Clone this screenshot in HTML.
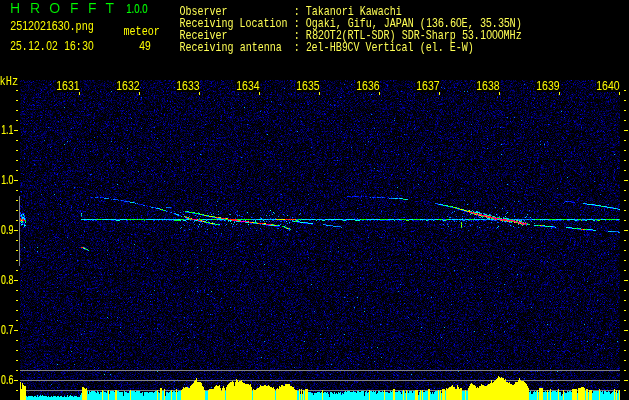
<!DOCTYPE html>
<html lang="en"><head><meta charset="utf-8"><title>HROFFT</title>
<style>
html,body{margin:0;padding:0;background:#000;overflow:hidden}
svg{display:block}
.m,.s,.t{white-space:pre}
.m{font-family:"Liberation Mono",monospace;font-size:13.5px;fill:#ff0;stroke:none}
.d{font-family:"Liberation Sans",sans-serif;font-size:12.6px}
.w{fill:#ffff55}
.s{font-family:"Liberation Sans",sans-serif;font-size:12.5px;fill:#ff0;stroke:#ff0;stroke-width:.15px}
.g{fill:#0f0;stroke:#0f0}
.t{font-family:"Liberation Sans",sans-serif;font-size:14px;fill:#0f0;stroke:#000;stroke-width:.16px;paint-order:fill stroke}
</style></head>
<body>
<svg width="629" height="400" viewBox="0 0 629 400">
<defs><filter id="nz" x="0" y="0" width="100%" height="100%" filterUnits="objectBoundingBox" color-interpolation-filters="sRGB"><feTurbulence type="fractalNoise" baseFrequency="1.7" numOctaves="1" seed="3"/><feColorMatrix type="matrix" values="0 0 0 0 0  1 0 0 0 0  1 0 0 0 0  0 0 0 0 1"/><feComponentTransfer><feFuncG type="table" tableValues="0 0 0 0 0 0 0 0 0 0 0 0 0 0 0 0 0 0 0 0 0 0 0 0 0 0 0 0 0 0 0 0 0 0 0 0 0 0 0 0 0 0 0 0 0 0 0 0 0 0 0 0 0 0 0 0 0 0 0 0 0 0 0 0 0 0 0 0 0 0 0 0 0 0 0 0 0 0 0 0 0 0 0 0 0 0 0 0 0 0 0 0 0 0 0 0 0 0 0 0 0 0 0 0 0 0 0 0 0 0 0 0 0 0 0 0 0 0 0 0 0 0 0 0 0 0 0 0 0 0 0 0 0 0 0 0 0 0 0 0 0 0 0 0 0 0 0 0 0 0 0 0 0 0 0 0 0 0 0 0 0 0 0 0 0 0 0 0 0 0 0 0 0 0 0 0 0 0 0 0 0 0 0 0 0 0 0 0 0 0 0 0 0 0 0 0.0476 0.0952 0.143 0.19 0.238 0.286 0.333 0.381 0.429 0.476 0.524 0.571 0.619 0.667 0.686 0.706 0.725 0.745 0.765 0.784 0.804 0.824 0.843 0.863 0.882 0.902 0.922 0.941 0.961 0.98 1 1 1 1 1 1 1 1 1 1 1 1 1 1 1 1 1 1 1 1 1 1 1 1 1 1 1 1 1 1 1"/><feFuncB type="table" tableValues="0 0 0 0 0 0 0 0 0 0 0 0 0 0 0 0 0 0 0 0 0 0 0 0 0 0 0 0 0 0 0 0 0 0 0 0 0 0 0 0 0 0 0 0 0 0 0 0 0 0 0 0 0 0 0 0 0 0 0 0 0 0 0 0 0 0 0 0 0 0 0 0 0 0 0 0 0 0 0 0 0 0 0 0 0 0 0 0 0 0 0 0 0 0 0 0 0 0 0 0 0 0 0 0 0 0 0 0 0 0 0 0 0 0 0 0 0 0 0 0 0 0 0 0 0 0 0 0 0.0235 0.0706 0.118 0.165 0.172 0.179 0.186 0.193 0.2 0.207 0.214 0.221 0.229 0.236 0.243 0.25 0.257 0.264 0.271 0.278 0.285 0.292 0.3 0.307 0.314 0.325 0.336 0.346 0.357 0.368 0.379 0.39 0.401 0.412 0.423 0.434 0.444 0.455 0.466 0.477 0.488 0.499 0.51 0.529 0.549 0.569 0.588 0.608 0.627 0.647 0.667 0.686 0.706 0.725 0.745 0.765 0.784 0.804 0.824 0.843 0.859 0.875 0.89 0.906 0.922 0.937 0.953 0.969 0.984 1 1 1 1 1 1 1 1 1 1 1 1 1 1 1 1 1 1 1 1 1 1 1 1 1 1 1 1 1 1 1 1 1 1 1 1 1 1 1 1 1 1 1 1 1 1 1 1 1 1 1 1 1 1 1 1 1 1 1"/></feComponentTransfer></filter></defs>
<rect width="629" height="400" fill="#000"/>
<rect x="20" y="80" width="600" height="320" fill="#00003c" filter="url(#nz)"/>
<path d="M56 80h24v12h-24zM116 80h24v12h-24zM176 80h24v12h-24zM236 80h24v12h-24zM296 80h24v12h-24zM356 80h24v12h-24zM416 80h24v12h-24zM476 80h24v12h-24zM536 80h24v12h-24zM596 80h24v12h-24z" fill="#000"/>
<g opacity="0.999" transform="rotate(0.02)">
<text class="t" y="13" x="9.9 0 29.9 0 49.3 0 69.9 0 87.9 0 105.6" xml:space="preserve">H R O F F T</text>
<text class="s g" x="126.2" y="13" textLength="21.4" lengthAdjust="spacingAndGlyphs">1.0.0</text>
<text class="m" y="30" xml:space="preserve"><tspan class="d" x="10.3" textLength="59.4" lengthAdjust="spacingAndGlyphs">2512021630</tspan><tspan x="69.5" textLength="24.3" lengthAdjust="spacingAndGlyphs">.png</tspan></text>
<text class="m" y="50" xml:space="preserve"><tspan class="d" x="10.3" textLength="11.4" lengthAdjust="spacingAndGlyphs">25</tspan><tspan x="21.5" textLength="6.3" lengthAdjust="spacingAndGlyphs">.</tspan><tspan class="d" x="28.3" textLength="11.4" lengthAdjust="spacingAndGlyphs">12</tspan><tspan x="39.5" textLength="6.3" lengthAdjust="spacingAndGlyphs">.</tspan><tspan class="d" x="46.3" textLength="11.4" lengthAdjust="spacingAndGlyphs">02</tspan><tspan> </tspan><tspan class="d" x="64.3" textLength="11.4" lengthAdjust="spacingAndGlyphs">16</tspan><tspan x="75.5" textLength="6.3" lengthAdjust="spacingAndGlyphs">:</tspan><tspan class="d" x="82.3" textLength="11.4" lengthAdjust="spacingAndGlyphs">30</tspan></text>
<text class="m" y="35" xml:space="preserve"><tspan x="123.5" textLength="36.3" lengthAdjust="spacingAndGlyphs">meteor</tspan></text>
<text class="m" y="50" xml:space="preserve"><tspan class="d" x="139.3" textLength="11.4" lengthAdjust="spacingAndGlyphs">49</tspan></text>
<text class="m w" y="15" xml:space="preserve"><tspan x="179.5" textLength="222.3" lengthAdjust="spacingAndGlyphs">Observer           : Takanori Kawachi</tspan></text>
<text class="m w" y="27" xml:space="preserve"><tspan x="179.5" textLength="246.3" lengthAdjust="spacingAndGlyphs">Receiving Location : Ogaki, Gifu, JAPAN (</tspan><tspan class="d" x="426.3" textLength="17.4" lengthAdjust="spacingAndGlyphs">136</tspan><tspan x="443.5" textLength="6.3" lengthAdjust="spacingAndGlyphs">.</tspan><tspan class="d" x="450.3" textLength="11.4" lengthAdjust="spacingAndGlyphs">60</tspan><tspan x="461.5" textLength="12.3" lengthAdjust="spacingAndGlyphs">E,</tspan><tspan> </tspan><tspan class="d" x="480.3" textLength="11.4" lengthAdjust="spacingAndGlyphs">35</tspan><tspan x="491.5" textLength="6.3" lengthAdjust="spacingAndGlyphs">.</tspan><tspan class="d" x="498.3" textLength="11.4" lengthAdjust="spacingAndGlyphs">35</tspan><tspan x="509.5" textLength="12.3" lengthAdjust="spacingAndGlyphs">N)</tspan></text>
<text class="m w" y="39" xml:space="preserve"><tspan x="179.5" textLength="132.3" lengthAdjust="spacingAndGlyphs">Receiver           : R</tspan><tspan class="d" x="312.3" textLength="17.4" lengthAdjust="spacingAndGlyphs">820</tspan><tspan x="329.5" textLength="6.3" lengthAdjust="spacingAndGlyphs">T</tspan><tspan class="d" x="336.3" textLength="5.4" lengthAdjust="spacingAndGlyphs">2</tspan><tspan x="341.5" textLength="114.3" lengthAdjust="spacingAndGlyphs">(RTL-SDR) SDR-Sharp</tspan><tspan> </tspan><tspan class="d" x="462.3" textLength="11.4" lengthAdjust="spacingAndGlyphs">53</tspan><tspan x="473.5" textLength="6.3" lengthAdjust="spacingAndGlyphs">.</tspan><tspan class="d" x="480.3" textLength="23.4" lengthAdjust="spacingAndGlyphs">1000</tspan><tspan x="503.5" textLength="18.3" lengthAdjust="spacingAndGlyphs">MHz</tspan></text>
<text class="m w" y="51" xml:space="preserve"><tspan x="179.5" textLength="120.3" lengthAdjust="spacingAndGlyphs">Receiving antenna  :</tspan><tspan> </tspan><tspan class="d" x="306.3" textLength="5.4" lengthAdjust="spacingAndGlyphs">2</tspan><tspan x="311.5" textLength="30.3" lengthAdjust="spacingAndGlyphs">el-HB</tspan><tspan class="d" x="342.3" textLength="5.4" lengthAdjust="spacingAndGlyphs">9</tspan><tspan x="347.5" textLength="126.3" lengthAdjust="spacingAndGlyphs">CV Vertical (el. E-W)</tspan></text>
<text class="m" x="-0.4" y="85" textLength="18.6" lengthAdjust="spacingAndGlyphs">kHz</text>
<text class="m" y="90" xml:space="preserve"><tspan class="d" x="56.3" textLength="23.4" lengthAdjust="spacingAndGlyphs">1631</tspan></text>
<text class="m" y="90" xml:space="preserve"><tspan class="d" x="116.3" textLength="23.4" lengthAdjust="spacingAndGlyphs">1632</tspan></text>
<text class="m" y="90" xml:space="preserve"><tspan class="d" x="176.3" textLength="23.4" lengthAdjust="spacingAndGlyphs">1633</tspan></text>
<text class="m" y="90" xml:space="preserve"><tspan class="d" x="236.3" textLength="23.4" lengthAdjust="spacingAndGlyphs">1634</tspan></text>
<text class="m" y="90" xml:space="preserve"><tspan class="d" x="296.3" textLength="23.4" lengthAdjust="spacingAndGlyphs">1635</tspan></text>
<text class="m" y="90" xml:space="preserve"><tspan class="d" x="356.3" textLength="23.4" lengthAdjust="spacingAndGlyphs">1636</tspan></text>
<text class="m" y="90" xml:space="preserve"><tspan class="d" x="416.3" textLength="23.4" lengthAdjust="spacingAndGlyphs">1637</tspan></text>
<text class="m" y="90" xml:space="preserve"><tspan class="d" x="476.3" textLength="23.4" lengthAdjust="spacingAndGlyphs">1638</tspan></text>
<text class="m" y="90" xml:space="preserve"><tspan class="d" x="536.3" textLength="23.4" lengthAdjust="spacingAndGlyphs">1639</tspan></text>
<text class="m" y="90" xml:space="preserve"><tspan class="d" x="596.3" textLength="23.4" lengthAdjust="spacingAndGlyphs">1640</tspan></text>

<text class="s" x="1.2" y="134" textLength="12.3" lengthAdjust="spacingAndGlyphs">1.1</text>
<text class="s" x="1.2" y="184" textLength="12.3" lengthAdjust="spacingAndGlyphs">1.0</text>
<text class="s" x="1.2" y="234" textLength="12.3" lengthAdjust="spacingAndGlyphs">0.9</text>
<text class="s" x="1.2" y="284" textLength="12.3" lengthAdjust="spacingAndGlyphs">0.8</text>
<text class="s" x="1.2" y="334" textLength="12.3" lengthAdjust="spacingAndGlyphs">0.7</text>
<text class="s" x="1.2" y="384" textLength="12.3" lengthAdjust="spacingAndGlyphs">0.6</text>
</g>
<path d="M79 92v3M139 92v3M199 92v3M259 92v3M319 92v3M379 92v3M439 92v3M499 92v3M559 92v3M619 92v3" stroke="#ff0" stroke-width="1" fill="none" transform="translate(.5 0)" shape-rendering="crispEdges"/>
<path d="M16 90h2M624 90h2M16 100h2M624 100h2M16 110h2M624 110h2M16 120h2M624 120h2M14 130h4M624 130h4M16 140h2M624 140h2M16 150h2M624 150h2M16 160h2M624 160h2M16 170h2M624 170h2M14 180h4M624 180h4M16 190h2M624 190h2M16 200h2M624 200h2M16 210h2M624 210h2M16 220h2M624 220h2M14 230h4M624 230h4M16 240h2M624 240h2M16 250h2M624 250h2M16 260h2M624 260h2M16 270h2M624 270h2M14 280h4M624 280h4M16 290h2M624 290h2M16 300h2M624 300h2M16 310h2M624 310h2M16 320h2M624 320h2M14 330h4M624 330h4M16 340h2M624 340h2M16 350h2M624 350h2M16 360h2M624 360h2M16 370h2M624 370h2M14 380h4M624 380h4M16 390h2M624 390h2" stroke="#ff0" stroke-width="1" fill="none" transform="translate(0 .5)" shape-rendering="crispEdges"/>
<path d="M20 370.5h600M20 380.5h600M20 390.5h600M19.5 196v70" stroke="#848484" stroke-width="1" fill="none" shape-rendering="crispEdges"/>
<g transform="translate(0 .5)" stroke-width="1" fill="none" shape-rendering="crispEdges">
<path stroke="#0000cc" d="M139 204h2M585 204h1M149 206h1M170 208h1M159 209h1M173 213h1M196 214h1M568 228h1M587 230h1M81 248h1"/>
<path stroke="#0000e6" d="M350 196h1M353 196h1M366 196h1M571 201h1M437 204h1M586 204h1M146 205h1M441 205h1M592 205h1M147 206h1M154 207h1M610 208h2M162 210h1M467 212h1M470 213h1M179 215h1M206 223h1M303 223h2M311 224h1M274 226h1M279 226h1M551 227h1M553 227h2M569 228h1M577 229h1M583 230h1M586 230h1M588 230h2"/>
<path stroke="#0000ff" d="M358 196h1M363 196h1M92 197h1M101 197h2M375 197h1M398 198h1M569 201h1M573 202h1M142 204h1M599 206h1M605 207h1M617 209h1M167 211h1M464 211h1M185 212h1M180 215h1M85 220h2M90 220h1M95 220h1M112 220h1M277 220h1M279 220h1M346 220h1M369 220h1M384 220h1M388 220h1M399 220h1M431 220h1M534 220h1M557 220h1M584 220h1M596 220h1M617 220h1M297 222h1M250 223h1M305 223h1M312 224h1M218 225h1M266 225h1M275 226h2M278 226h1M540 226h1M552 227h1M570 228h1M578 229h1M590 230h3M84 249h1M87 250h1"/>
<path stroke="#001aff" d="M348 196h2M352 196h1M354 196h1M356 196h2M365 196h1M103 197h1M372 197h1M374 197h1M384 197h1M388 197h1M123 200h1M565 201h1M567 201h1M564 202h1M572 202h1M207 203h1M563 203h1M593 205h2M287 206h1M446 206h1M600 206h1M450 207h2M606 207h1M612 208h1M461 210h1M520 210h1M20 212h1M170 212h1M186 212h1M210 212h1M235 212h1M22 213h2M192 213h1M175 214h1M24 215h1M514 215h1M20 216h1M22 216h1M206 216h1M242 216h1M21 217h1M24 217h1M21 218h1M25 218h1M186 218h1M216 218h1M244 218h1M260 218h1M25 219h1M113 220h1M130 220h1M153 220h1M169 220h1M173 220h1M202 220h1M217 220h1M272 220h1M283 220h2M295 220h1M298 220h1M309 220h1M333 220h1M335 220h1M363 220h1M374 220h1M382 220h2M386 220h1M400 220h2M412 220h2M420 220h1M440 220h1M442 220h1M446 220h1M454 220h1M462 220h1M475 220h2M483 220h2M491 220h1M496 220h1M530 220h1M544 220h1M549 220h2M553 220h1M555 220h2M559 220h1M569 220h1M574 220h1M582 220h1M611 220h1M23 221h1M284 221h1M443 221h1M449 221h1M451 221h1M477 221h1M23 222h1M187 222h1M200 222h1M241 222h1M299 222h1M505 222h1M20 223h1M22 223h1M24 223h1M289 223h1M306 223h1M447 223h1M240 224h1M21 225h1M189 225h1M219 225h1M213 226h1M277 226h1M542 226h1M23 227h1M198 227h1M441 228h1M571 228h1M241 229h1M288 229h1M242 234h1"/>
<path stroke="#0033ff" d="M347 196h1M361 196h1M96 197h1M379 197h1M383 197h1M111 199h1M116 199h1M122 200h1M124 201h1M128 201h1M568 201h1M570 201h1M574 202h1M475 203h1M141 204h1M442 205h1M150 206h1M458 209h1M300 210h1M183 211h1M187 212h1M207 213h1M451 213h1M463 213h1M236 214h1M177 215h1M202 215h1M491 215h1M81 216h1M186 216h1M241 216h1M478 216h1M212 217h1M235 218h1M184 219h1M316 219h1M324 219h1M343 219h1M355 219h1M406 219h1M443 219h1M581 219h1M93 220h1M96 220h1M126 220h2M158 220h1M162 220h1M166 220h1M171 220h1M221 220h1M225 220h1M243 220h1M253 220h1M285 220h1M288 220h1M319 220h1M328 220h1M332 220h1M342 220h1M377 220h1M380 220h2M387 220h1M389 220h1M428 220h1M453 220h1M460 220h1M468 220h1M485 220h1M540 220h1M548 220h1M552 220h1M554 220h1M560 220h1M563 220h1M567 220h2M577 220h1M609 220h1M616 220h1M618 220h1M198 221h1M208 221h1M471 221h1M298 222h1M498 222h1M208 223h1M472 224h1M215 225h1M225 225h1M541 226h1M543 226h1M487 227h1M496 228h1M579 229h1M616 231h1M238 235h1M85 249h1"/>
<path stroke="#004dff" d="M355 196h1M91 197h1M380 197h1M390 198h1M117 199h1M118 200h1M127 201h1M134 202h1M436 203h2M153 207h1M155 207h1M452 207h1M455 208h1M237 211h1M465 211h1M188 212h1M20 213h1M193 213h1M253 213h1M22 214h1M198 214h1M20 215h1M476 215h1M200 216h1M207 216h1M456 216h1M260 217h1M270 218h1M116 219h1M185 219h1M198 219h1M224 219h1M323 219h1M344 219h1M356 219h1M394 219h1M408 219h1M433 219h1M445 219h1M463 219h1M524 219h1M594 219h1M84 220h1M92 220h1M154 220h1M190 220h1M220 220h1M273 220h1M290 220h1M331 220h1M362 220h1M367 220h1M370 220h1M422 220h1M469 220h1M473 220h1M478 220h1M492 220h1M494 220h1M520 220h1M542 220h1M578 220h1M583 220h1M605 220h1M186 221h1M269 221h1M280 221h2M456 221h1M459 221h1M466 221h1M506 221h1M193 222h1M510 222h1M522 222h1M202 223h1M251 223h1M253 223h1M307 223h1M194 224h1M212 224h2M260 224h1M325 224h1M524 224h1M184 225h1M285 225h1M526 225h1M201 226h1M340 226h1M464 226h1M477 226h1M544 226h1M554 226h1M260 228h1M289 229h1M580 229h1M256 230h1M205 231h1M296 231h1M216 233h1M531 237h1"/>
<path stroke="#0066ff" d="M95 197h1M100 197h1M373 197h1M377 197h2M115 199h1M125 201h1M129 201h1M216 205h1M447 206h1M167 207h4M459 209h1M260 210h1M462 210h1M529 210h1M180 212h1M198 212h1M194 213h1M213 213h1M81 214h1M183 214h1M203 215h1M269 215h1M189 216h1M197 216h1M208 216h1M462 216h1M213 217h1M251 217h1M449 217h1M199 218h1M275 218h1M117 219h1M119 219h1M144 219h1M255 219h1M296 219h2M357 219h2M427 219h1M444 219h1M451 219h1M458 219h1M464 219h1M480 219h1M485 219h1M487 219h1M490 219h1M494 219h1M513 219h1M522 219h1M525 219h2M529 219h3M575 219h1M585 219h2M593 219h1M599 219h1M300 220h1M518 220h1M199 221h1M234 221h1M264 221h1M266 221h1M292 221h1M204 222h1M497 222h1M209 223h1M254 223h1M465 223h1M214 224h1M526 224h1M268 225h1M331 225h2M232 226h1M336 226h1M180 228h1M278 228h1M189 229h1M289 230h1M451 230h1M468 230h1M617 231h1M221 233h1"/>
<path stroke="#0080ff" d="M97 197h1M382 197h1M106 198h1M108 198h1M391 198h2M113 199h2M121 200h1M126 201h1M566 201h1M137 203h1M435 203h1M586 203h1M438 204h1M143 205h2M151 207h1M495 207h1M456 208h1M617 208h1M218 211h1M452 212h1M274 213h1M300 213h1M483 213h2M506 213h1M218 214h1M229 214h1M283 214h1M299 214h1M195 215h1M237 215h1M239 215h1M278 216h1M447 216h1M499 216h1M514 216h1M214 217h1M292 217h1M479 217h1M217 218h1M462 218h1M508 218h1M118 219h1M206 219h1M322 219h1M345 219h1M359 219h1M407 219h1M426 219h1M510 219h1M518 219h1M520 219h1M576 219h1M597 219h2M495 220h1M200 221h1M260 221h1M454 221h1M255 223h1M287 223h1M534 223h1M226 224h1M236 224h1M324 224h1M443 224h1M328 225h1M330 225h1M470 225h1M338 226h2M553 226h1M284 227h1M518 227h1M615 231h1M619 232h1"/>
<path stroke="#0099ff" d="M104 198h1M107 198h1M389 198h1M394 198h1M585 203h1M594 204h1M166 207h1M612 207h1M502 208h1M616 208h1M165 210h1M463 210h1M472 210h1M166 211h1M466 211h1M171 212h1M174 213h1M21 214h1M178 214h1M199 214h1M230 214h1M272 214h1M266 215h1M21 216h1M24 216h1M526 216h1M450 217h1M480 217h1M499 217h1M23 218h1M218 218h1M251 219h1M263 219h1M266 219h1M268 219h2M271 219h1M519 219h1M528 219h1M194 220h1M463 220h2M524 220h1M20 221h1M194 221h1M228 221h1M299 221h1M504 221h1M205 222h1M212 222h1M245 222h1M307 222h1M491 222h1M509 222h1M24 224h1M262 224h1M280 224h1M24 226h1M198 226h1M333 226h1M337 226h1M448 226h1M181 227h1M341 227h1M479 227h1M286 228h1M207 229h1M592 229h1M612 231h1M614 231h1"/>
<path stroke="#00b2ff" d="M105 198h1M393 198h1M402 198h1M132 202h1M584 203h1M611 207h1M156 208h1M618 209h1M477 211h1M175 213h1M472 213h1M480 213h2M211 214h1M527 214h1M185 217h1M482 217h1M503 217h1M187 218h1M219 218h1M92 219h1M163 219h1M210 219h1M252 219h2M262 219h1M270 219h1M274 219h1M395 219h1M397 219h1M425 219h1M431 219h1M488 219h1M516 219h1M521 219h1M523 219h1M583 219h1M195 220h1M229 220h1M240 220h1M519 220h1M305 222h2M231 223h1M256 223h1M233 224h1M323 224h1M518 224h1M527 224h1M269 225h1M279 225h1M329 225h1M334 226h2M513 226h1M609 231h1M611 231h1M613 231h1M618 232h1M83 248h1"/>
<path stroke="#00ccff" d="M397 198h1M399 198h1M406 199h2M130 202h1M133 202h1M135 203h1M583 203h1M441 204h2M590 204h1M606 206h1M152 207h1M157 208h1M159 208h1M188 211h1M471 211h1M479 212h1M177 214h1M486 214h1M489 214h1M496 214h1M178 215h1M287 215h1M181 216h1M493 216h1M486 217h1M530 217h1M261 218h1M488 218h1M503 218h1M507 218h1M82 219h2M86 219h1M90 219h1M94 219h2M102 219h1M108 219h3M113 219h1M137 219h1M146 219h1M155 219h2M158 219h1M160 219h2M165 219h9M175 219h2M186 219h1M209 219h1M218 219h1M220 219h1M254 219h1M256 219h1M258 219h1M273 219h1M275 219h1M307 219h1M309 219h3M315 219h1M318 219h1M320 219h2M327 219h2M330 219h1M334 219h1M340 219h1M353 219h1M367 219h1M369 219h2M372 219h1M374 219h1M396 219h1M398 219h1M423 219h2M429 219h1M434 219h1M442 219h1M455 219h2M460 219h2M465 219h1M468 219h1M475 219h1M477 219h1M484 219h1M486 219h1M491 219h1M497 219h1M508 219h1M512 219h1M514 219h2M517 219h1M527 219h1M533 219h1M542 219h1M548 219h1M577 219h1M588 219h1M591 219h1M602 219h1M605 219h1M618 219h1M292 220h1M521 220h1M236 221h1M255 221h1M502 221h1M289 222h1M511 222h1M263 224h1M270 225h1M272 225h1M326 225h2M570 227h2M289 228h1M591 229h1M595 230h1M608 231h1"/>
<path stroke="#00e5ff" d="M395 198h2M405 199h1M439 204h2M587 204h2M591 204h1M593 204h1M600 205h1M609 207h1M158 208h1M476 211h1M475 212h1M478 212h1M507 212h1M176 214h1M495 217h1M525 217h1M85 219h1M93 219h1M103 219h2M111 219h1M114 219h1M123 219h1M125 219h1M147 219h3M153 219h2M162 219h1M174 219h1M187 219h2M204 219h1M207 219h2M211 219h1M217 219h1M219 219h1M221 219h1M257 219h1M264 219h1M272 219h1M302 219h1M305 219h2M308 219h1M313 219h2M317 219h1M319 219h1M332 219h1M338 219h2M342 219h1M347 219h2M350 219h1M352 219h1M373 219h1M375 219h4M388 219h3M392 219h1M409 219h2M422 219h1M428 219h1M430 219h1M435 219h1M450 219h1M453 219h2M478 219h2M481 219h1M492 219h2M507 219h1M534 219h1M541 219h1M543 219h1M546 219h2M556 219h1M558 219h2M561 219h1M567 219h1M573 219h1M584 219h1M587 219h1M590 219h1M592 219h1M617 219h1M224 220h1M255 220h1M324 220h1M433 220h1M443 220h1M237 221h1M297 221h1M234 222h1M246 222h1M304 222h1M309 223h2M264 224h1M271 225h1M510 225h1M535 225h1M498 226h1M552 226h1M497 227h1M590 229h1M593 230h1M610 231h1"/>
<path stroke="#00ff00" d="M403 199h1M449 206h1M161 209h1M163 210h1M186 211h1M191 212h2M195 213h1M23 215h1M185 216h1M482 216h1M497 217h2M21 219h1M101 219h1M127 219h2M131 219h1M136 219h1M138 219h1M140 219h1M143 219h1M145 219h1M189 219h1M191 219h1M200 219h2M216 219h1M227 219h1M243 219h3M247 219h1M249 219h1M298 219h1M361 219h2M364 219h2M380 219h2M384 219h1M386 219h1M401 219h1M403 219h2M413 219h1M417 219h1M419 219h1M439 219h1M441 219h1M446 219h1M469 219h1M472 219h1M537 219h1M550 219h2M555 219h1M565 219h2M578 219h1M595 219h2M600 219h1M606 219h2M609 219h3M619 219h1M25 220h1M144 220h1M597 220h1M21 221h1M25 221h1M510 221h1M22 222h1M207 222h1M517 222h1M215 224h1M217 224h1M273 224h1M538 225h2M282 226h1M286 227h1M461 227h1M586 229h1M85 248h1"/>
<path stroke="#00ff33" d="M404 199h1M444 205h1M601 206h1M459 208h1M468 210h1M185 211h1M190 212h1M474 212h1M196 213h3M202 214h1M484 214h1M207 215h1M492 216h1M96 219h1M129 219h2M133 219h1M135 219h1M141 219h1M180 219h4M190 219h1M199 219h1M213 219h2M226 219h1M240 219h1M242 219h1M246 219h1M250 219h1M299 219h2M363 219h1M382 219h2M387 219h1M402 219h1M405 219h1M414 219h1M416 219h1M418 219h1M438 219h1M440 219h1M447 219h1M470 219h2M473 219h1M499 219h1M509 219h1M535 219h1M538 219h2M549 219h1M552 219h1M562 219h3M579 219h1M608 219h1M614 219h2M174 220h6M295 221h1M208 222h1M254 222h1M256 222h1M527 223h1M461 224h1M277 225h1M283 226h1M576 228h2M579 228h1"/>
<path stroke="#00ff66" d="M131 202h1M451 206h1M164 210h1M193 212h1M477 214h1M81 215h1M487 215h1M489 215h2M214 216h1M494 216h1M97 219h1M99 219h2M132 219h1M134 219h1M139 219h1M142 219h1M202 219h1M225 219h1M238 219h2M301 219h1M366 219h1M385 219h1M400 219h1M448 219h1M536 219h1M553 219h2M582 219h1M612 219h2M616 219h1M516 220h1M239 221h1M293 221h1M296 221h1M255 222h1M218 224h1M521 224h1M529 224h1M536 225h1M547 226h1M549 226h1M574 228h1M578 228h1M290 229h1M87 249h1"/>
<path stroke="#00ff99" d="M443 205h1M446 205h1M448 206h1M602 206h2M456 207h1M613 208h1M162 209h1M463 209h1M470 211h1M473 211h1M189 212h1M470 214h1M208 215h1M488 215h1M481 216h1M188 218h1M220 218h1M506 218h1M241 219h1M197 220h1M322 220h1M343 220h2M355 220h1M357 220h1M427 220h1M444 220h1M514 220h1M585 220h1M205 221h1M209 222h1M303 222h1M216 224h1M265 224h1M522 225h1M543 225h1M545 226h1M580 228h1M587 229h1M88 250h1"/>
<path stroke="#00ffcc" d="M445 205h1M447 205h1M595 205h1M597 205h1M599 205h1M452 206h1M605 206h1M607 207h2M610 207h1M614 208h1M187 211h1M194 212h1M476 212h1M199 213h1M203 214h1M485 214h1M489 218h1M505 218h1M81 219h1M89 219h1M112 219h1M177 219h1M223 219h1M260 219h2M304 219h1M335 219h2M360 219h1M391 219h1M436 219h1M466 219h1M474 219h1M482 219h1M498 219h1M545 219h1M560 219h1M569 219h2M574 219h1M603 219h1M116 220h2M119 220h1M180 220h1M183 220h1M231 220h1M316 220h1M323 220h1M345 220h1M359 220h1M394 220h1M408 220h1M426 220h1M576 220h1M593 220h2M238 221h1M294 221h1M520 221h1M247 222h2M214 223h1M219 224h1M273 225h1M534 225h1M537 225h1M284 226h1M546 226h1M567 227h2M573 228h1M575 228h1M588 229h1M594 230h1"/>
<path stroke="#00ffff" d="M400 198h2M589 204h1M592 204h1M596 205h1M598 205h1M604 206h1M615 208h1M619 209h1M270 210h1M247 212h1M273 212h1M477 212h1M81 213h1M23 214h1M21 215h1M505 216h1M22 217h2M22 218h1M24 218h1M487 218h1M501 218h1M24 219h1M84 219h1M87 219h2M91 219h1M105 219h3M115 219h1M120 219h3M124 219h1M126 219h1M150 219h3M157 219h1M159 219h1M164 219h1M178 219h2M203 219h1M205 219h1M222 219h1M259 219h1M265 219h1M267 219h1M303 219h1M312 219h1M325 219h2M329 219h1M331 219h1M333 219h1M337 219h1M341 219h1M346 219h1M349 219h1M351 219h1M354 219h1M368 219h1M371 219h1M379 219h1M393 219h1M399 219h1M411 219h2M420 219h2M432 219h1M437 219h1M449 219h1M452 219h1M457 219h1M459 219h1M462 219h1M467 219h1M476 219h1M483 219h1M489 219h1M532 219h1M540 219h1M544 219h1M557 219h1M568 219h1M571 219h2M589 219h1M601 219h1M604 219h1M118 220h1M184 220h2M196 220h1M206 220h1M228 220h1M230 220h1M245 220h1M263 220h1M356 220h1M358 220h1M575 220h1M586 220h1M22 221h1M201 221h1M230 221h1M286 221h1M298 221h1M505 221h1M21 222h1M25 222h1M300 222h3M308 223h1M311 223h2M21 224h2M199 224h1M248 224h1M24 225h2M278 225h1M544 225h1M548 226h1M550 226h2M555 227h1M566 227h1M569 227h1M572 228h1M589 229h1"/>
<path stroke="#33ff00" d="M450 206h1M453 207h1M466 210h1M474 214h1M213 216h1M483 216h1M491 218h2M500 218h1M504 218h1M98 219h1M212 219h1M215 219h1M237 219h1M248 219h1M415 219h1M511 219h1M580 219h1M297 220h1M407 220h1M502 220h1M512 221h1M521 221h1M461 222h1M525 222h1M528 224h1M276 225h1M542 225h1M585 229h1M86 249h1"/>
<path stroke="#66ff00" d="M454 207h2M479 213h1M200 214h2M206 215h1M188 217h1M296 220h1M406 220h1M445 220h1M581 220h1M598 220h2M511 221h1M206 222h1M516 222h1M523 222h1M210 223h1M213 223h1M272 224h1M285 227h1M288 228h1M584 229h1M83 247h1"/>
<path stroke="#99ff00" d="M457 208h2M160 209h1M460 209h1M462 209h1M471 213h1M204 215h2M212 216h1M219 217h1M227 218h1M278 219h2M506 220h1M517 220h1M204 221h1M461 223h1M275 225h1M461 225h1M461 226h1"/>
<path stroke="#ccff00" d="M469 210h1M479 215h1M209 216h3M215 217h1M220 217h1M197 219h1M276 219h1M280 219h3M507 221h1M519 221h1M253 222h1M211 223h1M257 223h1M520 223h1M540 225h1"/>
<path stroke="#ff0000" d="M476 213h1M217 217h1M487 217h1M20 218h1M20 219h1M23 219h1M196 219h1M229 219h1M285 219h1M290 219h1M20 220h1M23 220h2M199 220h1M261 223h1M521 223h1M525 224h1"/>
<path stroke="#ff0028" d="M472 212h1M484 216h1M190 218h1M287 219h1M292 219h1M496 219h1M232 220h1M234 220h1M505 220h1M513 221h1M249 222h1M522 224h1M582 229h1"/>
<path stroke="#ff0050" d="M470 212h1M480 214h2M494 217h1M189 218h1M223 218h1M493 218h2M498 218h1M503 220h1M247 221h1M262 223h1M526 223h1M268 224h1"/>
<path stroke="#ff0078" d="M471 212h1M475 213h1M483 215h1M485 215h1M487 216h4M491 217h2M495 218h3M22 219h1M192 219h2M228 219h1M502 219h4M22 220h1M198 220h1M233 220h1M236 220h1M500 220h1M507 220h1M509 220h4M241 221h1M245 221h1M508 221h1M517 221h1M515 222h1M521 222h1M519 223h1M525 223h1M266 224h2M269 224h2"/>
<path stroke="#ff00a0" d="M469 212h1M474 213h1M478 214h2M478 215h1M482 215h1M484 215h1M486 215h1M195 219h1M506 219h1M508 220h1M513 220h1M244 221h1M246 221h1M514 221h3M519 222h2M523 223h2"/>
<path stroke="#ff00c8" d="M493 217h1M499 218h1M194 219h1M500 219h2M235 220h1M240 221h1M242 221h2M518 222h1M522 223h1"/>
<path stroke="#ff3300" d="M473 213h1M481 215h1M187 217h1M490 217h1M221 218h2M224 218h1M230 219h7M286 219h1M288 219h1M294 219h1M237 220h1M202 221h1M259 223h2M263 223h1M541 225h1M81 247h2"/>
<path stroke="#ff6600" d="M473 212h1M476 214h1M489 217h1M225 218h1M289 219h1M200 220h1M238 220h1M504 220h1M250 222h2M258 223h1M581 229h1"/>
<path stroke="#ff9900" d="M468 211h1M477 213h1M184 216h1M485 216h1M186 217h1M216 217h1M218 217h1M488 217h1M277 219h1M291 219h1M293 219h1M495 219h1M239 220h1M501 220h1M271 224h1M523 224h1"/>
<path stroke="#ffcc00" d="M465 210h1M467 211h1M469 211h1M475 214h1M480 215h1M486 216h1M191 218h1M295 219h1M201 220h1M248 221h1M509 221h1M518 223h1M274 225h1M583 229h1"/>
<path stroke="#ffff00" d="M461 209h1M464 210h1M226 218h1M283 219h2M21 220h1M203 221h1M252 222h1M514 222h1M212 223h1M264 223h2M287 228h1M84 248h1"/>
</g>
<path d="M26 396V400M27 397V400M28 396V400M29 396V400M30 396V400M31 396V400M32 396V400M33 397V400M34 396V400M35 396V400M36 397V400M37 395V400M38 397V400M39 396V400M40 395V400M41 396V400M42 395V400M43 396V400M44 396V400M45 396V400M46 396V400M47 397V400M48 396V400M49 397V400M50 397V400M51 396V400M52 397V400M53 396V400M54 396V400M55 396V400M56 397V400M57 396V400M58 396V400M59 397V400M60 396V400M61 396V400M62 397V400M63 397V400M64 396V400M65 397V400M66 397V400M67 395V400M68 397V400M69 396V400M70 395V400M71 396V400M72 396V400M73 397V400M74 396V400M75 396V400M76 396V400M77 397V400M78 397V400M79 397V400M80 395V400M81 393V400M87 391V400M88 394V400M89 391V400M90 392V400M91 391V400M92 391V400M93 391V400M94 391V400M95 392V400M96 393V400M97 391V400M98 392V400M99 394V400M100 392V400M101 392V400M103 391V400M104 392V400M105 392V400M106 393V400M107 391V400M109 394V400M110 391V400M111 391V400M112 391V400M113 391V400M114 392V400M117 391V400M118 391V400M119 392V400M120 392V400M121 392V400M122 392V400M123 396V400M124 391V400M125 392V400M126 392V400M127 393V400M128 393V400M129 391V400M131 391V400M132 391V400M133 391V400M134 391V400M135 392V400M136 391V400M137 391V400M138 391V400M139 391V400M140 393V400M141 393V400M142 392V400M143 396V400M144 392V400M145 392V400M146 392V400M147 392V400M148 393V400M149 392V400M150 392V400M151 392V400M152 392V400M153 393V400M154 392V400M155 391V400M156 391V400M158 392V400M159 393V400M162 391V400M163 391V400M165 396V400M166 392V400M167 392V400M168 393V400M169 392V400M170 391V400M172 392V400M173 391V400M174 391V400M175 392V400M177 392V400M178 391V400M179 391V400M180 391V400M205 391V400M206 391V400M207 391V400M225 391V400M252 391V400M275 391V400M297 391V400M298 391V400M300 394V400M302 394V400M304 391V400M308 392V400M309 392V400M310 392V400M311 393V400M312 393V400M313 395V400M314 393V400M315 393V400M316 393V400M317 392V400M318 392V400M319 392V400M320 393V400M321 392V400M323 393V400M324 392V400M325 392V400M326 393V400M327 392V400M328 394V400M329 397V400M330 392V400M331 392V400M332 393V400M333 394V400M334 392V400M335 394V400M336 393V400M337 394V400M338 392V400M339 393V400M340 392V400M341 395V400M342 393V400M343 394V400M344 392V400M345 391V400M346 392V400M347 391V400M348 391V400M349 391V400M350 392V400M351 392V400M352 392V400M353 391V400M354 392V400M355 392V400M356 393V400M357 391V400M358 391V400M359 392V400M360 392V400M361 391V400M362 391V400M363 391V400M364 396V400M365 392V400M366 391V400M367 393V400M368 392V400M370 391V400M371 391V400M372 392V400M373 391V400M374 392V400M375 391V400M376 394V400M377 393V400M378 391V400M379 391V400M380 392V400M381 392V400M382 391V400M383 392V400M385 392V400M386 392V400M387 392V400M388 393V400M389 393V400M390 391V400M391 392V400M392 391V400M395 392V400M396 392V400M397 392V400M398 391V400M399 391V400M400 392V400M401 394V400M402 391V400M404 391V400M405 393V400M407 391V400M408 393V400M409 391V400M410 391V400M411 391V400M412 393V400M413 391V400M414 391V400M418 395V400M419 392V400M421 391V400M423 392V400M424 392V400M425 391V400M426 391V400M427 391V400M430 392V400M431 394V400M432 392V400M433 394V400M434 392V400M435 391V400M436 391V400M437 391V400M439 391V400M441 393V400M445 391V400M462 391V400M463 391V400M464 391V400M466 391V400M467 391V400M529 392V400M530 391V400M531 394V400M532 394V400M533 392V400M534 391V400M535 392V400M536 391V400M538 392V400M543 392V400M544 392V400M545 391V400M546 392V400M548 392V400M549 391V400M551 392V400M552 391V400M553 391V400M554 391V400M555 391V400M556 392V400M557 391V400M559 392V400M560 392V400M561 396V400M562 394V400M564 392V400M565 393V400M566 393V400M567 391V400M568 392V400M569 391V400M570 391V400M571 392V400M577 393V400M585 391V400M588 392V400M592 393V400M593 391V400M594 391V400M595 391V400M596 391V400M597 391V400M598 391V400M600 391V400M601 392V400M602 391V400M603 394V400M604 391V400M605 391V400M606 392V400M607 392V400M608 391V400M609 392V400M610 394V400M611 393V400M612 392V400M613 391V400M615 392V400M617 393V400M618 391V400" stroke="#0ff" stroke-width="1" fill="none" transform="translate(.5 0)" shape-rendering="crispEdges"/>
<path d="M20 382V400M21 389V400M22 383V400M23 385V400M24 386V400M25 386V400M82 387V400M83 387V400M84 388V400M85 389V400M86 388V400M102 390V400M108 390V400M115 390V400M116 390V400M130 390V400M157 390V400M160 388V400M161 388V400M164 389V400M171 390V400M176 389V400M181 390V400M182 389V400M183 387V400M184 388V400M185 387V400M186 387V400M187 387V400M188 388V400M189 388V400M190 386V400M191 385V400M192 384V400M193 383V400M194 381V400M195 380V400M196 378V400M197 382V400M198 382V400M199 382V400M200 382V400M201 383V400M202 386V400M203 387V400M204 390V400M208 390V400M209 389V400M210 389V400M211 389V400M212 389V400M213 389V400M214 387V400M215 386V400M216 385V400M217 386V400M218 386V400M219 385V400M220 388V400M221 391V400M222 388V400M223 386V400M224 388V400M226 387V400M227 385V400M228 384V400M229 383V400M230 382V400M231 382V400M232 381V400M233 382V400M234 386V400M235 382V400M236 379V400M237 380V400M238 382V400M239 381V400M240 381V400M241 380V400M242 382V400M243 383V400M244 383V400M245 384V400M246 384V400M247 384V400M248 384V400M249 385V400M250 384V400M251 387V400M253 389V400M254 390V400M255 390V400M256 389V400M257 388V400M258 388V400M259 387V400M260 385V400M261 386V400M262 386V400M263 386V400M264 385V400M265 385V400M266 386V400M267 386V400M268 385V400M269 386V400M270 387V400M271 387V400M272 388V400M273 387V400M274 389V400M276 389V400M277 388V400M278 389V400M279 386V400M280 387V400M281 385V400M282 385V400M283 386V400M284 386V400M285 384V400M286 384V400M287 384V400M288 384V400M289 384V400M290 386V400M291 386V400M292 387V400M293 387V400M294 389V400M295 390V400M296 390V400M299 389V400M301 389V400M303 390V400M305 389V400M306 389V400M307 389V400M322 390V400M369 390V400M384 390V400M393 389V400M394 389V400M403 390V400M406 390V400M415 390V400M416 390V400M417 390V400M420 390V400M422 390V400M428 389V400M429 389V400M438 390V400M440 390V400M442 389V400M443 389V400M444 389V400M446 388V400M447 389V400M448 388V400M449 387V400M450 387V400M451 386V400M452 385V400M453 387V400M454 387V400M455 389V400M456 389V400M457 385V400M458 387V400M459 389V400M460 388V400M461 388V400M465 390V400M468 388V400M469 386V400M470 384V400M471 383V400M472 384V400M473 385V400M474 385V400M475 386V400M476 388V400M477 387V400M478 388V400M479 386V400M480 386V400M481 384V400M482 385V400M483 385V400M484 386V400M485 386V400M486 386V400M487 385V400M488 384V400M489 384V400M490 383V400M491 380V400M492 383V400M493 382V400M494 381V400M495 380V400M496 379V400M497 378V400M498 376V400M499 377V400M500 378V400M501 377V400M502 378V400M503 378V400M504 380V400M505 379V400M506 382V400M507 382V400M508 383V400M509 382V400M510 384V400M511 384V400M512 385V400M513 385V400M514 384V400M515 382V400M516 382V400M517 382V400M518 380V400M519 378V400M520 380V400M521 381V400M522 381V400M523 381V400M524 382V400M525 383V400M526 384V400M527 386V400M528 388V400M537 390V400M539 388V400M540 388V400M541 388V400M542 388V400M547 390V400M550 389V400M558 389V400M563 390V400M572 389V400M573 389V400M574 389V400M575 389V400M576 389V400M578 388V400M579 388V400M580 388V400M581 387V400M582 387V400M583 387V400M584 388V400M586 389V400M587 389V400M589 390V400M590 390V400M591 390V400M599 389V400M614 389V400M616 390V400M619 390V400" stroke="#ff0" stroke-width="1" fill="none" transform="translate(.5 0)" shape-rendering="crispEdges"/>
</svg>
</body></html>
